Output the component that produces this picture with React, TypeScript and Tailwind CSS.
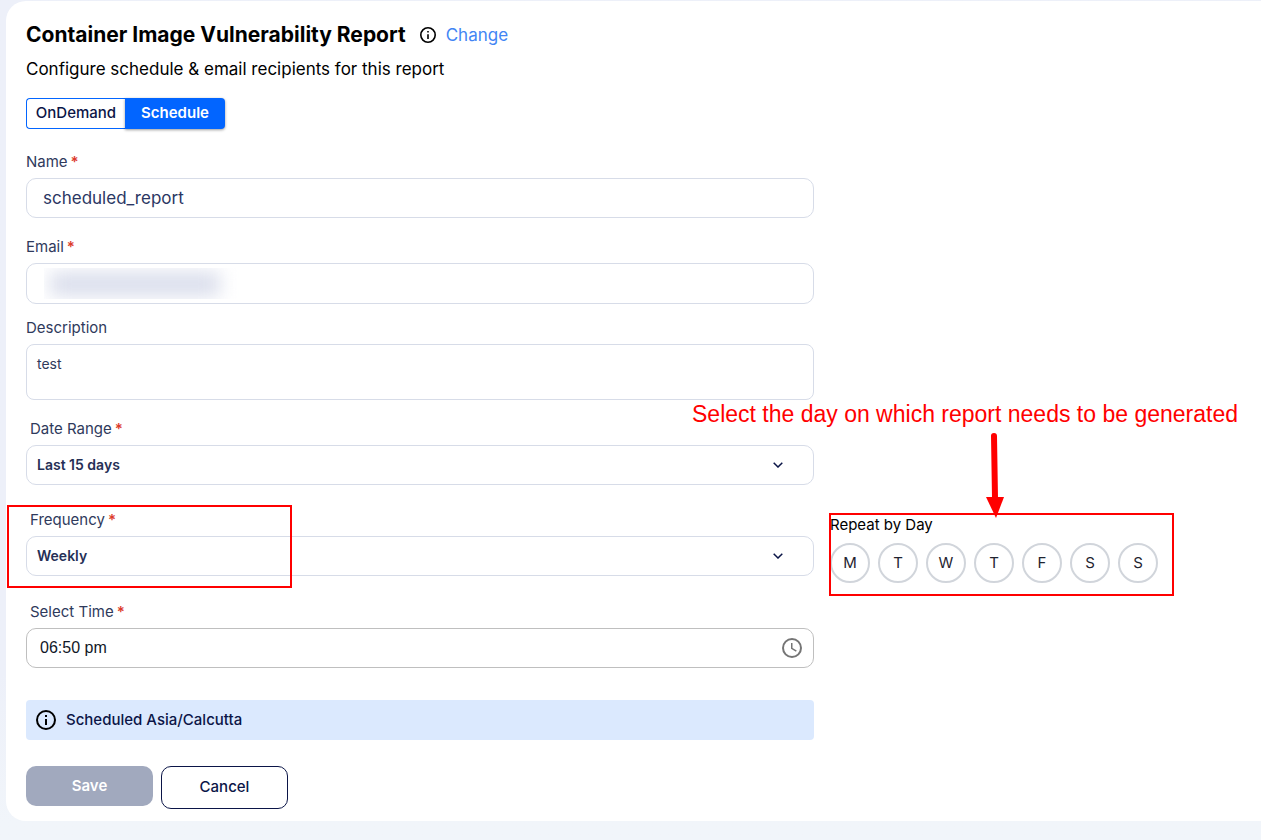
import { useState } from 'react';
import type { ReactNode } from 'react';

const DAYS = [
  { id: 'mon', name: 'Monday', letter: 'M' },
  { id: 'tue', name: 'Tuesday', letter: 'T' },
  { id: 'wed', name: 'Wednesday', letter: 'W' },
  { id: 'thu', name: 'Thursday', letter: 'T' },
  { id: 'fri', name: 'Friday', letter: 'F' },
  { id: 'sat', name: 'Saturday', letter: 'S' },
  { id: 'sun', name: 'Sunday', letter: 'S' },
];

function InfoIcon({ className }: { className: string }) {
  return (
    <svg viewBox="0 0 20 20" className={className} fill="none" aria-hidden="true">
      <circle cx="10" cy="10" r="9" stroke="currentColor" strokeWidth="2" />
      <path d="M9 5h2v2H9zM9 9h2v6H9z" fill="currentColor" />
    </svg>
  );
}

function ClockIcon() {
  return (
    <svg viewBox="0 0 20 20" className="size-5" fill="none" stroke="#757575" aria-hidden="true">
      <circle cx="10" cy="10" r="9" strokeWidth="2" />
      <path d="M9.75 5v5.4l4.6 2.7" strokeWidth="1.5" />
    </svg>
  );
}

function Chevron() {
  return (
    <svg
      viewBox="0 0 10 6"
      className="pointer-events-none absolute top-1/2 right-[31px] h-1.5 w-2.5 -translate-y-1/2"
      fill="none"
      stroke="#0b1547"
      strokeWidth="1.5"
      aria-hidden="true"
    >
      <path d="M.7.7 5 5 9.300.7" />
    </svg>
  );
}

function Label({ htmlFor, required, inset, children }: { htmlFor: string; required?: boolean; inset?: boolean; children: ReactNode }) {
  return (
    <label htmlFor={htmlFor} className={`mb-1.5 flex gap-[3px] text-[15px] leading-5 text-[#2f3a5c] ${inset ? 'pl-1' : ''}`}>
      {children}
      {required && <span className="font-semibold text-[#dc3a2c]">*</span>}
    </label>
  );
}

function SelectBox({ id, options }: { id: string; options: string[] }) {
  return (
    <div className="relative">
      <select
        id={id}
        className="block h-10 w-full appearance-none rounded-[10px] border border-[#d7dce8] bg-white px-2.5 text-sm font-semibold text-[#263056]"
      >
        {options.map((o) => (
          <option key={o}>{o}</option>
        ))}
      </select>
      <Chevron />
    </div>
  );
}

export default function App() {
  const [name, setName] = useState('scheduled_report');
  const [email, setEmail] = useState('');
  const [description, setDescription] = useState('test');
  const [time, setTime] = useState('06:50 pm');
  const [days, setDays] = useState<string[]>([]);

  const toggleDay = (id: string) =>
    setDays((current) => (current.includes(id) ? current.filter((d) => d !== id) : [...current, id]));

  return (
    <div className="min-h-screen overflow-x-hidden bg-linear-to-b from-[#edf0f9] from-80% to-[#f1f5fa] to-98% pt-px pl-1.5 font-[Inter,sans-serif] text-black">
      <main className="rounded-l-[20px] bg-white pt-5 pb-3 pl-5">
        <header>
          <div className="flex items-center">
            <h1 className="text-[21px] leading-7 font-bold">Container Image Vulnerability Report</h1>
            <InfoIcon className="ml-3.5 size-4" />
            <a href="#change" className="ml-2.5 text-[17px] leading-6 text-[#4285f4]">
              Change
            </a>
          </div>
          <p className="mt-2 text-[17px] leading-6">Configure schedule &amp; email recipients for this report</p>
        </header>

        <div className="mt-[17px] flex h-[31px] text-[15px] font-medium">
          <button type="button" className="w-[99px] rounded-l border border-r-0 border-[#0265ff] text-[#0b1547]">
            OnDemand
          </button>
          <button type="button" className="w-[100px] rounded-r bg-[#0265ff] font-semibold text-white shadow-[0_1px_3px_rgba(0,0,0,0.4)]">
            Schedule
          </button>
        </div>

        <form className="mt-[23px] grid grid-cols-[788fr_431fr] gap-x-4" onSubmit={(e) => e.preventDefault()}>
          <div className="col-start-1">
            <Label htmlFor="name" required>Name</Label>
            <input
              id="name"
              value={name}
              onChange={(e) => setName(e.target.value)}
              className="block h-10 w-full rounded-[10px] border border-[#d7dce8] px-4 text-[17px] text-[#2b3763]"
            />
          </div>

          <div className="col-start-1 mt-[19px]">
            <Label htmlFor="email" required>Email</Label>
            <div className="relative">
              <input
                id="email"
                type="email"
                value={email}
                onChange={(e) => setEmail(e.target.value)}
                className="block h-[41px] w-full rounded-[10px] border border-[#d7dce8] px-4 text-[17px] text-[#2b3763]"
              />
              <div className="pointer-events-none absolute top-[5px] left-[18px] h-[31px] w-[196px] overflow-hidden">
                <div className="mt-1 ml-1.5 h-6 w-[170px] bg-[#dadeec] blur-[9px]" />
              </div>
            </div>
          </div>

          <div className="col-start-1 mt-3.5">
            <Label htmlFor="description">Description</Label>
            <textarea
              id="description"
              value={description}
              onChange={(e) => setDescription(e.target.value)}
              className="block h-14 w-full resize-none rounded-lg border border-[#d7dce8] px-2.5 py-[9px] text-sm leading-5 text-[#2f3a5c]"
            />
          </div>

          <div className="col-start-1 mt-[19px]">
            <Label htmlFor="range" required inset>Date Range</Label>
            <SelectBox id="range" options={['Last 15 days', 'Last 30 days', 'Last 60 days']} />
          </div>

          <div className="relative col-start-1 mt-[25px]">
            <Label htmlFor="frequency" required inset>Frequency</Label>
            <SelectBox id="frequency" options={['Weekly', 'Daily', 'Monthly']} />
            <div className="pointer-events-none absolute -top-[5px] -left-[19px] h-[83px] w-[285px] border-2 border-[#ff0000]" />
          </div>

          <div role="group" aria-labelledby="repeat-label" className="relative col-start-2 mt-[25px] pt-[5px]">
            <div id="repeat-label" className="text-[15px] leading-5">Repeat by Day</div>
            <div className="mt-2 flex gap-2">
              {DAYS.map((d) => (
                <button
                  key={d.id}
                  type="button"
                  aria-label={d.name}
                  aria-pressed={days.includes(d.id)}
                  onClick={() => toggleDay(d.id)}
                  className="size-10 shrink-0 rounded-full border-2 border-[#d1d5db] text-[15px] text-[#1f2430] aria-pressed:bg-[#dbe9fe]"
                >
                  {d.letter}
                </button>
              ))}
            </div>
            <div className="pointer-events-none absolute top-[3px] -left-px h-[83px] w-[345px] border-2 border-[#ff0000]" />
            <svg
              viewBox="0 0 20 86"
              className="pointer-events-none absolute -top-[78px] left-[155px] h-[86px] w-5"
              aria-hidden="true"
            >
              <path d="M9 4 10 66" stroke="#ff0000" strokeWidth="6" strokeLinecap="round" />
              <path d="M1 65h18l-8 21z" fill="#ff0000" />
            </svg>
            <p className="pointer-events-none absolute -top-28 -left-[138px] font-['Liberation_Sans',sans-serif] text-[23px] leading-8 whitespace-nowrap text-[#ff0000]">
              Select the day on which report needs to be generated
            </p>
          </div>

          <div className="col-start-1 mt-[19px]">
            <Label htmlFor="time" required inset>Select Time</Label>
            <div className="relative">
              <input
                id="time"
                value={time}
                onChange={(e) => setTime(e.target.value)}
                className="block h-10 w-full rounded-[10px] border border-[#bfbfbf] px-[13px] font-['Liberation_Sans',sans-serif] text-base text-[#111827]"
              />
              <button type="button" aria-label="Choose time" className="absolute top-2.5 right-3">
                <ClockIcon />
              </button>
            </div>
          </div>

          <div className="col-start-1 mt-8 flex h-10 items-center gap-2.5 rounded bg-[#dbe9fe] pl-2.5 text-[15px] font-medium">
            <InfoIcon className="size-5" />
            <span className="text-[#0b1547]">Scheduled Asia/Calcutta</span>
          </div>

          <div className="col-start-1 mt-[26px] flex items-start gap-2 text-[15px]">
            <button type="submit" disabled className="h-10 w-[127px] rounded-[10px] bg-[#a1a9be] font-semibold text-white">
              Save
            </button>
            <button type="button" className="h-[43px] w-[127px] rounded-[10px] border border-[#0b1547] font-medium text-[#0b1547]">
              Cancel
            </button>
          </div>
        </form>
      </main>
    </div>
  );
}
